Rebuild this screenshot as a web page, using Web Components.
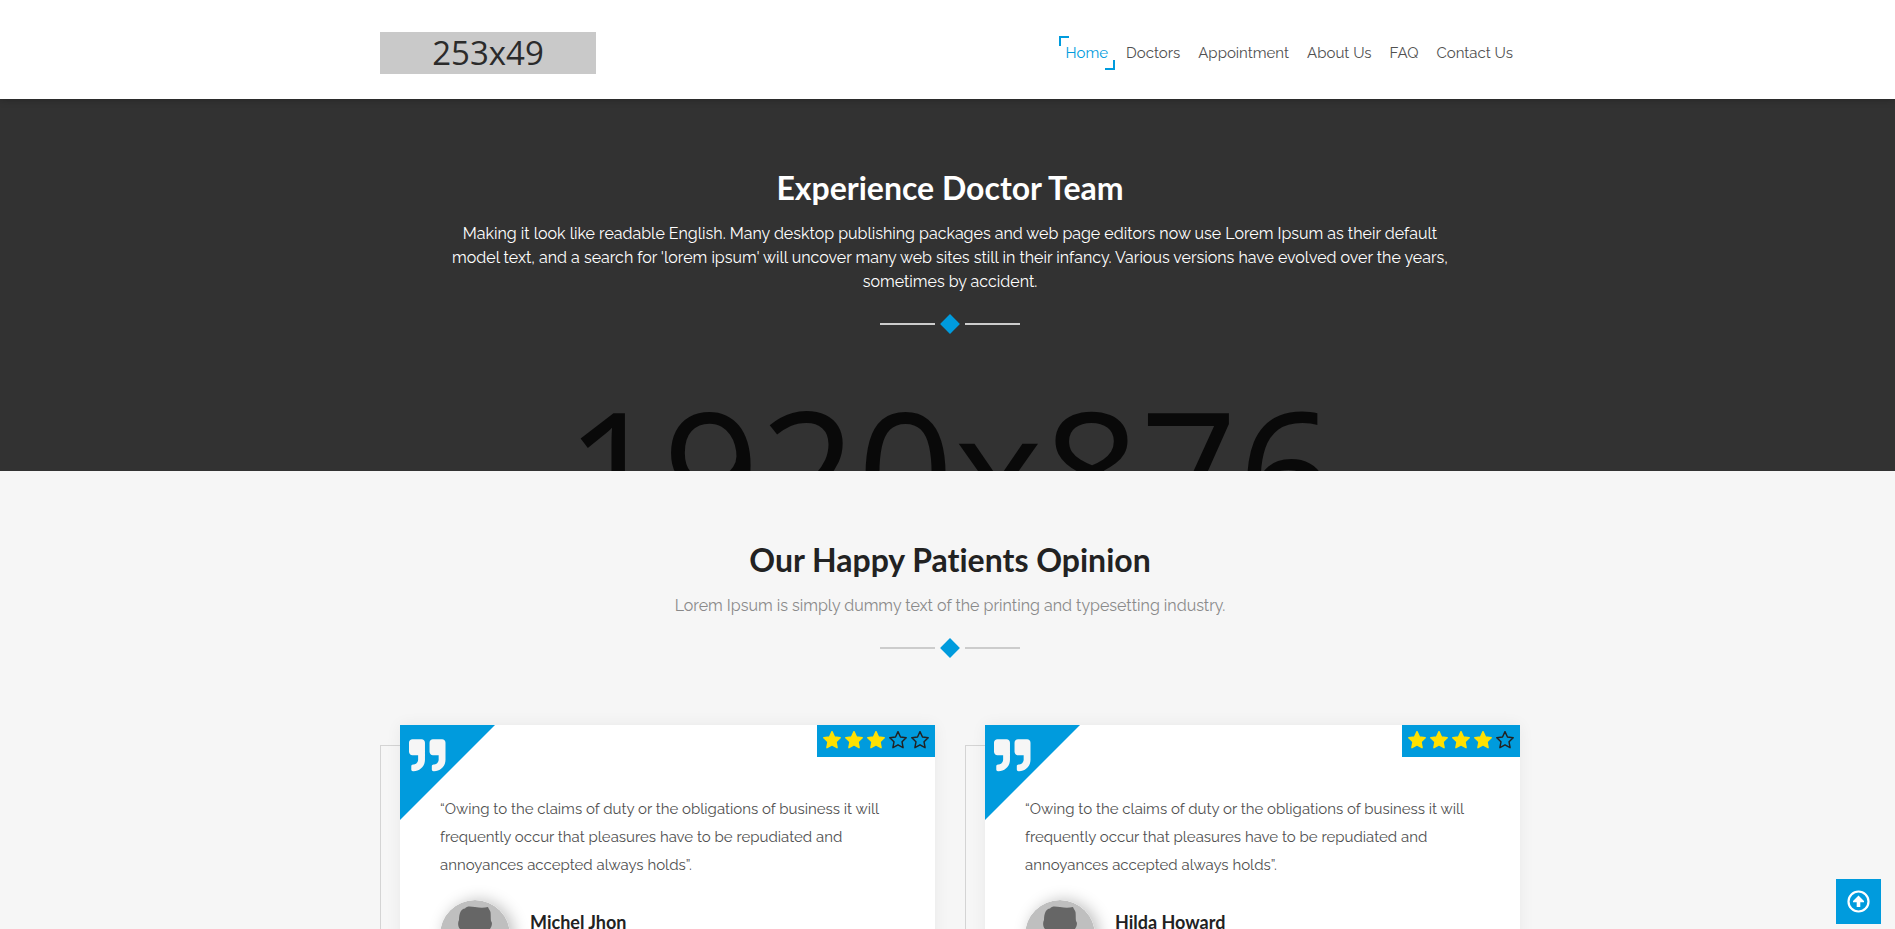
<!DOCTYPE html>
<html lang="en">
<head>
    <meta charset="utf-8">
    <meta name="viewport" content="width=device-width, initial-scale=1">
    <title>Medical</title>
    <style>
        :root {
            --blue: #009bdd;
            --dark: #222;
            --content: 1140px;
            --shift: 5px;
        }

        body {
            margin: 0;
            background-color: #f6f6f6;
            color: #505050;
            font-family: Raleway, Lato, sans-serif;
            font-size: 15px;
        }
    </style>
</head>
<body>
    <site-header>
        <nav-link href="#home" active>Home</nav-link>
        <nav-link href="#doctors">Doctors</nav-link>
        <nav-link href="#appointment">Appointment</nav-link>
        <nav-link href="#about">About Us</nav-link>
        <nav-link href="#faq">FAQ</nav-link>
        <nav-link href="#contact">Contact Us</nav-link>
    </site-header>

    <main>
        <page-banner picture="1920x876">
            <section-title light>
                <span slot="title">Experience Doctor Team</span>
                Making it look like readable English. Many desktop publishing packages and web page editors now use Lorem Ipsum as their default model text, and a search for 'lorem ipsum' will uncover many web sites still in their infancy. Various versions have evolved over the years, sometimes by accident.
            </section-title>
        </page-banner>

        <patient-opinions>
            <section-title slot="title">
                <span slot="title">Our Happy Patients Opinion</span>
                Lorem Ipsum is simply dummy text of the printing and typesetting industry.
            </section-title>
            <opinion-card stars="3">
                <span slot="name">Michel Jhon</span>
                “Owing to the claims of duty or the obligations of business it will frequently occur that pleasures have to be repudiated and annoyances accepted always holds”.
            </opinion-card>
            <opinion-card stars="4">
                <span slot="name">Hilda Howard</span>
                “Owing to the claims of duty or the obligations of business it will frequently occur that pleasures have to be repudiated and annoyances accepted always holds”.
            </opinion-card>
        </patient-opinions>
    </main>

    <back-to-top></back-to-top>

    <script>
        class SiteHeader extends HTMLElement {
            constructor() {
                super()
                this.shadow = this.attachShadow({ mode: 'open' })
            }

            connectedCallback() {
                this.shadow.innerHTML = `
                <style>
                :host {
                    display: block;
                    position: relative;
                    z-index: 2;
                    background-color: #fff;
                    box-shadow: 0 0 8px rgba(0, 0, 0, 0.3);
                }
                header {
                    display: flex;
                    flex-wrap: wrap;
                    justify-content: space-between;
                    align-items: center;
                    gap: 20px;
                    max-width: var(--content);
                    min-height: 99px;
                    margin: 0 auto;
                    padding-left: var(--shift);
                }
                .logo {
                    display: flex;
                    justify-content: center;
                    align-items: center;
                    width: 216px;
                    height: 42px;
                    margin-top: 7px;
                    background-color: #c9c9c9;
                    color: #2b2b2b;
                    font-family: "Open Sans", sans-serif;
                    font-size: 33px;
                    line-height: 42px;
                    text-decoration: none;
                }
                nav {
                    display: flex;
                    flex-wrap: wrap;
                    gap: 4px;
                    margin-top: 7px;
                }
                </style>
                <header>
                    <a class="logo" href="#home">253x49</a>
                    <nav><slot></slot></nav>
                </header>
                `
            }
        }

        class NavLink extends HTMLElement {
            constructor() {
                super()
                this.shadow = this.attachShadow({ mode: 'open' })
            }

            connectedCallback() {
                this.shadow.innerHTML = `
                <style>
                :host {
                    display: block;
                }
                a {
                    display: block;
                    position: relative;
                    padding: 0 7px;
                    color: inherit;
                    font-size: 15px;
                    line-height: 34px;
                    text-decoration: none;
                }
                a:hover,
                :host([active]) a {
                    color: var(--blue);
                }
                :host([active]) a::before,
                :host([active]) a::after {
                    content: "";
                    position: absolute;
                    width: 8px;
                    height: 8px;
                    border: 0 solid var(--blue);
                }
                :host([active]) a::before {
                    left: 0;
                    top: 0;
                    border-width: 2px 0 0 2px;
                }
                :host([active]) a::after {
                    right: 0;
                    bottom: 0;
                    border-width: 0 2px 2px 0;
                }
                </style>
                <a href="${this.getAttribute('href')}"><slot></slot></a>
                `
            }
        }

        class PageBanner extends HTMLElement {
            constructor() {
                super()
                this.shadow = this.attachShadow({ mode: 'open' })
            }

            connectedCallback() {
                this.shadow.innerHTML = `
                <style>
                :host {
                    display: block;
                    position: relative;
                    overflow: hidden;
                    padding-bottom: 70px;
                    background-color: #323232;
                }
                .picture {
                    position: absolute;
                    left: var(--shift);
                    right: 0;
                    top: 280px;
                    color: #090909;
                    font-family: "Open Sans", sans-serif;
                    font-size: 170px;
                    font-weight: 500;
                    line-height: 180px;
                    text-align: center;
                }
                .content {
                    position: relative;
                }
                </style>
                <div class="picture">${this.getAttribute('picture')}</div>
                <div class="content"><slot></slot></div>
                `
            }
        }

        class SectionTitle extends HTMLElement {
            constructor() {
                super()
                this.shadow = this.attachShadow({ mode: 'open' })
            }

            connectedCallback() {
                this.shadow.innerHTML = `
                <style>
                :host {
                    display: block;
                    max-width: 1000px;
                    margin: 0 auto;
                    padding: 70px 0 67px var(--shift);
                    color: #8a8a8a;
                    text-align: center;
                }
                :host([light]) {
                    color: #fff;
                }
                h2 {
                    margin: 0 0 15px;
                    color: var(--dark);
                    font-family: Lato, sans-serif;
                    font-size: 32px;
                    font-weight: 700;
                    font-variant-ligatures: none;
                    line-height: 38px;
                }
                :host([light]) h2 {
                    color: #fff;
                }
                p {
                    margin: 0;
                    font-size: 16px;
                    line-height: 24px;
                }
                .divider {
                    display: flex;
                    justify-content: center;
                    align-items: center;
                    gap: 8px;
                    height: 20px;
                    margin-top: 20px;
                }
                .divider::before,
                .divider::after {
                    content: "";
                    width: 55px;
                    height: 2px;
                    background-color: #ccc;
                }
                .divider i {
                    width: 14px;
                    height: 14px;
                    background-color: var(--blue);
                    transform: rotate(45deg);
                }
                </style>
                <h2><slot name="title"></slot></h2>
                <p><slot></slot></p>
                <div class="divider"><i></i></div>
                `
            }
        }

        class PatientOpinions extends HTMLElement {
            constructor() {
                super()
                this.shadow = this.attachShadow({ mode: 'open' })
            }

            connectedCallback() {
                this.shadow.innerHTML = `
                <style>
                :host {
                    display: block;
                    padding-bottom: 70px;
                }
                .cards {
                    display: grid;
                    grid-template-columns: 1fr 1fr;
                    gap: 30px;
                    max-width: var(--content);
                    margin: 0 auto;
                    padding-left: var(--shift);
                }
                @media (max-width: 900px) {
                    .cards {
                        grid-template-columns: 1fr;
                    }
                }
                </style>
                <slot name="title"></slot>
                <div class="cards"><slot></slot></div>
                `
            }
        }

        class OpinionCard extends HTMLElement {
            constructor() {
                super()
                this.shadow = this.attachShadow({ mode: 'open' })
            }

            connectedCallback() {
                const count = Number(this.getAttribute('stars'))
                let stars = ''
                for (let i = 0; i < 5; i++) {
                    stars += `<svg class="${i < count ? 'full' : ''}" viewBox="1 1 16 16"><path d="M9 1.6 11.2 6.3 16.3 7 12.6 10.6 13.5 15.8 9 13.3 4.5 15.8 5.4 10.6 1.7 7 6.8 6.3Z"/></svg>`
                }

                this.shadow.innerHTML = `
                <style>
                :host {
                    display: block;
                    position: relative;
                    padding: 0 0 20px 20px;
                }
                /* outline behind the card */
                .frame {
                    position: absolute;
                    left: 0;
                    right: 20px;
                    top: 20px;
                    bottom: 0;
                    border: 1px solid #d4d4d4;
                }
                article {
                    position: relative;
                    padding: 70px 40px 40px;
                    background-color: #fff;
                    box-shadow: 0 0 15px rgba(0, 0, 0, 0.06);
                }
                .corner {
                    position: absolute;
                    left: 0;
                    top: 0;
                    width: 95px;
                    height: 95px;
                }
                .rating {
                    display: flex;
                    gap: 4px;
                    position: absolute;
                    right: 0;
                    top: 0;
                    padding: 6px 6px 8px;
                    background-color: var(--blue);
                }
                .rating svg {
                    width: 18px;
                    height: 18px;
                    fill: none;
                    stroke: var(--dark);
                    stroke-width: 1.3;
                    stroke-linejoin: round;
                }
                .rating svg.full {
                    fill: #ffe100;
                    stroke: #ffe100;
                }
                p {
                    margin: 0;
                    font-size: 15px;
                    line-height: 28px;
                }
                .patient {
                    display: flex;
                    align-items: flex-start;
                    gap: 20px;
                    margin-top: 21px;
                }
                .avatar {
                    width: 70px;
                    height: 70px;
                    border-radius: 50%;
                    box-shadow: 4px 0 15px rgba(0, 0, 0, 0.25);
                }
                h3 {
                    margin: 10px 0 0;
                    color: var(--dark);
                    font-family: Lato, sans-serif;
                    font-size: 18px;
                    font-weight: 700;
                    line-height: 24px;
                }
                </style>
                <div class="frame"></div>
                <article>
                    <svg class="corner" viewBox="0 0 95 95">
                        <path fill="#009bdd" d="M0 0H95L0 95Z"/>
                        <path fill="#f6f6f6" transform="translate(9 12) scale(.0713)" d="M464 32H336c-26.500 0-48 21.500-48 48v128c0 26.500 21.500 48 48 48h80v64c0 35.300-28.700 64-64 64h-8c-13.300 0-24 10.700-24 24v48c0 13.300 10.700 24 24 24h8c88.400 0 160-71.600 160-160V80c0-26.500-21.500-48-48-48zm-288 0H48C21.500 32 0 53.500 0 80v128c0 26.500 21.500 48 48 48h80v64c0 35.300-28.700 64-64 64h-8c-13.300 0-24 10.700-24 24v48c0 13.300 10.700 24 24 24h8c88.400 0 160-71.600 160-160V80c0-26.500-21.500-48-48-48z"/>
                    </svg>
                    <div class="rating" role="img" aria-label="${count} of 5">${stars}</div>
                    <p><slot></slot></p>
                    <div class="patient">
                        <svg class="avatar" viewBox="0 0 70 70">
                            <circle cx="35" cy="35" r="35" fill="#bfbfbf"/>
                            <path fill="#666" d="M19 20C19 13 21 9 25 8.500 27 5.500 31 6.500 35 7 40 8 44 8 48 7 48.500 9 50 10 50.500 12 51 16 50.500 18 51 21 53 23 51.500 27 50 29 48 37 45 41 42 43V48C50 50 57 52 60 59A35 35 0 0 1 10 59C13 52 20 50 28 48V43C24 41 21 36 20 29 18 27 17.500 23 19 20Z"/>
                        </svg>
                        <h3><slot name="name"></slot></h3>
                    </div>
                </article>
                `
            }
        }

        class BackToTop extends HTMLElement {
            constructor() {
                super()
                this.shadow = this.attachShadow({ mode: 'open' })
            }

            connectedCallback() {
                this.shadow.innerHTML = `
                <style>
                :host {
                    display: block;
                    position: fixed;
                    right: 14px;
                    bottom: 5px;
                    z-index: 3;
                }
                button {
                    display: flex;
                    justify-content: center;
                    align-items: center;
                    width: 45px;
                    height: 45px;
                    padding: 0;
                    border: none;
                    background-color: var(--blue);
                    cursor: pointer;
                }
                svg {
                    width: 23px;
                    height: 23px;
                }
                </style>
                <button type="button" aria-label="Back to top">
                    <svg viewBox="0 0 23 23">
                        <circle cx="11.500" cy="11.500" r="10" fill="none" stroke="#fff" stroke-width="2.200"/>
                        <path fill="#fff" d="M11.500 5.500 17 11V12.300H13.300V17H9.700V12.300H6V11Z"/>
                    </svg>
                </button>
                `
                this.shadow.querySelector('button').onclick = () => window.scrollTo({ top: 0, behavior: 'smooth' })
            }
        }

        customElements.define('site-header', SiteHeader)
        customElements.define('nav-link', NavLink)
        customElements.define('page-banner', PageBanner)
        customElements.define('section-title', SectionTitle)
        customElements.define('patient-opinions', PatientOpinions)
        customElements.define('opinion-card', OpinionCard)
        customElements.define('back-to-top', BackToTop)
    </script>
</body>
</html>
